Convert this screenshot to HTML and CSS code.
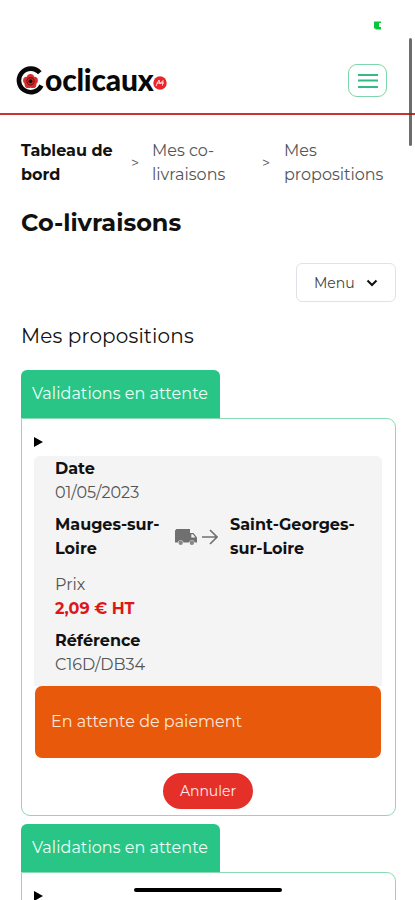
FILE: index.html
```
<!DOCTYPE html>
<html lang="fr">
<head>
    <meta charset="utf-8">
    <title>Coclicaux - Mes propositions</title>
    <meta name="viewport" content="width=device-width, initial-scale=1.0">
    <link rel="stylesheet" href="styles.css">
</head>
<body>
    <div class="status-bar">
        <svg class="status-icon" viewBox="0 0 7 9"><path d="M0.5 0.5H7V2H5V6H7V8.5H1.5V7.5H0V1Z"/></svg>
    </div>

    <header class="header">
        <div class="logo">
            <svg class="logo-mark" viewBox="0 0 28 30">
                <path d="M23.8 6.8A11.8 11.8 0 1 0 25.4 19.5" fill="none" stroke="#080808" stroke-width="4.6"/>
                <g fill="#d92d2c">
                    <circle cx="14.5" cy="11.6" r="3.6"/>
                    <circle cx="18.3" cy="14.4" r="3.6"/>
                    <circle cx="16.8" cy="18.4" r="3.6"/>
                    <circle cx="12.2" cy="18.4" r="3.6"/>
                    <circle cx="10.7" cy="14.4" r="3.6"/>
                </g>
                <circle cx="14.5" cy="15.3" r="3.6" fill="none" stroke="#7d1316" stroke-width="1.2"/>
                <circle cx="14.5" cy="15.3" r="2" fill="#180a0a"/>
            </svg>
            <span class="logo-text">oclicaux</span>
            <svg class="logo-badge" viewBox="0 0 14 14">
                <circle cx="7" cy="7" r="6.7" fill="#e9252b"/>
                <path d="M3 10L6 4L7 8L10 4.5L9.5 9.5M3.5 7H11" fill="none" stroke="#fff" stroke-width=".8"/>
            </svg>
        </div>
        <button class="burger" aria-label="Navigation">
            <svg viewBox="0 0 20 16"><path d="M0 2H20M0 7.5H20M0 14H20"/></svg>
        </button>
    </header>

    <main class="content">
        <nav class="breadcrumb">
            <b>Tableau de bord</b>
            <i>&gt;</i>
            <span>Mes co-<br>livraisons</span>
            <i>&gt;</i>
            <span>Mes propositions</span>
        </nav>

        <h1>Co-livraisons</h1>

        <div class="actions">
            <button class="menu-btn">
                Menu
                <svg viewBox="0 0 12 8"><path d="M1.5 1.5L6 6L10.5 1.5"/></svg>
            </button>
        </div>

        <h2>Mes propositions</h2>

        <section class="proposal">
            <div class="tab">Validations en attente</div>
            <div class="panel">
                <div class="summary"><svg viewBox="0 0 9 10"><path d="M0 0L9 5L0 10Z"/></svg></div>
                <div class="details">
                    <div class="field">
                        <div class="label">Date</div>
                        <div class="value">01/05/2023</div>
                    </div>
                    <div class="route">
                        <div class="label">Mauges-sur-<br>Loire</div>
                        <div class="route-icons">
                            <svg class="truck" viewBox="0 0 22 17">
                                <path fill="#707070" d="M1.5 0H15V4H18.5L22 8.5V13.5H19.8A3 3 0 0 0 14 13.5H8.6A3 3 0 0 0 2.8 13.5H0V1.5Z"/>
                                <path fill="#f4f4f4" d="M16.3 5.3H18L20.3 8.5H16.3Z"/>
                                <circle cx="5.7" cy="13.7" r="2.2"/>
                                <circle cx="16.9" cy="13.7" r="2.2"/>
                            </svg>
                            <svg class="arrow" viewBox="0 0 16 16"><path d="M0 8H15M8 1L15 8L8 15"/></svg>
                        </div>
                        <div class="label">Saint-Georges-<br>sur-Loire</div>
                    </div>
                    <div class="field">
                        <div class="value">Prix</div>
                        <div class="label price">2,09 € HT</div>
                    </div>
                    <div class="field">
                        <div class="label">Référence</div>
                        <div class="value">C16D/DB34</div>
                    </div>
                </div>
                <div class="alert">En attente de paiement</div>
                <button class="cancel-btn">Annuler</button>
            </div>
        </section>

        <section class="proposal">
            <div class="tab">Validations en attente</div>
            <div class="panel">
                <div class="summary"><svg viewBox="0 0 9 10"><path d="M0 0L9 5L0 10Z"/></svg></div>
            </div>
        </section>
    </main>

    <div class="scrollbar"></div>
    <div class="home-bar"></div>
</body>
</html>
```
FILE: styles.css
```
* {
    box-sizing: border-box;
}
body {
    margin: 0;
    height: 900px;
    overflow: hidden;
    position: relative;
    background: #fff;
    color: #111;
    font-family: Montserrat, Inter, sans-serif;
    font-size: 16px;
    line-height: 24px;
}
button {
    font-family: inherit;
    cursor: pointer;
}
svg {
    display: block;
}
.status-bar {
    height: 48px;
    padding: 21px 34px 0 0;
    display: flex;
    justify-content: flex-end;
}
.status-icon {
    width: 7px;
    height: 9px;
    fill: #08c63a;
}
.header {
    height: 67px;
    padding: 0 28px 0 16px;
    display: flex;
    justify-content: space-between;
    align-items: center;
    border-bottom: 2px solid #cf3030;
}
.logo {
    display: flex;
    align-items: center;
}
.logo-mark {
    width: 28px;
    height: 30px;
}
.logo-text {
    margin: -3px 0 0 1px;
    color: #080808;
    font-family: Lato, sans-serif;
    font-size: 30px;
    font-weight: 900;
    letter-spacing: -0.2px;
    line-height: 30px;
}
.logo-badge {
    width: 14px;
    height: 14px;
    margin: 4px 0 0 -1px;
}
.burger {
    width: 39px;
    height: 33px;
    padding: 0;
    display: flex;
    align-items: center;
    justify-content: center;
    background: #fff;
    border: 1px solid #7dd4ad;
    border-radius: 9px;
}
.burger svg {
    width: 20px;
    height: 16px;
    fill: none;
    stroke: #35b985;
    stroke-width: 2;
}
.content {
    height: 785px;
    padding: 24px 19px 0 21px;
    overflow: hidden;
}
.breadcrumb {
    display: grid;
    grid-template-columns: 110px 21px 110px 22px 112px;
    align-items: center;
    color: #555;
}
.breadcrumb b {
    width: 98px;
    color: #111;
    font-weight: 700;
}
.breadcrumb i {
    font-style: normal;
    font-size: 14px;
}
h1 {
    margin: 20px 0 0;
    font-size: 24px;
    font-weight: 700;
    line-height: 32px;
}
.actions {
    margin-top: 24px;
    display: flex;
    justify-content: flex-end;
}
.menu-btn {
    width: 100px;
    height: 39px;
    padding: 0 17px;
    display: flex;
    align-items: center;
    justify-content: space-between;
    background: #fff;
    border: 1px solid #dfe2e6;
    border-radius: 6px;
    color: #444;
    font-size: 14px;
}
.menu-btn svg {
    width: 12px;
    height: 8px;
    fill: none;
    stroke: #111;
    stroke-width: 2;
}
h2 {
    margin: 20px 0;
    font-size: 20px;
    font-weight: 400;
    letter-spacing: 0.15px;
    line-height: 28px;
}
.proposal {
    margin-bottom: 8px;
}
.tab {
    width: 199px;
    height: 48px;
    padding: 12px 0 0 11px;
    background: #28c587;
    border-radius: 6px 6px 0 0;
    color: #e9fff5;
    letter-spacing: 0.04px;
    white-space: nowrap;
}
.panel {
    height: 398px;
    padding: 0 13px 0 12px;
    border: 1px solid #8bdab6;
    border-radius: 0 9px 9px 9px;
}
.summary {
    height: 37px;
    padding: 18px 0 0;
}
.summary svg {
    width: 9px;
    height: 10px;
}
.details {
    height: 230px;
    padding: 1px 0 0 21px;
    background: #f4f4f4;
    border-radius: 6px 6px 0 0;
}
.field {
    margin-bottom: 8px;
}
.label {
    font-weight: 700;
}
.value {
    color: #555;
}
.route {
    margin-bottom: 12px;
    display: grid;
    grid-template-columns: 120px 55px 1fr;
    align-items: center;
}
.route-icons {
    display: flex;
    align-items: center;
    gap: 5px;
}
.truck {
    width: 22px;
    height: 17px;
    fill: #888;
}
.arrow {
    width: 16px;
    height: 16px;
    fill: none;
    stroke: #707070;
    stroke-width: 1.6;
}
.price {
    color: #dc1717;
}
.alert {
    height: 72px;
    margin: 0 1px;
    padding-left: 16px;
    background: #e9590c;
    border-radius: 7px;
    color: #ffe6d6;
    line-height: 71px;
}
.cancel-btn {
    display: block;
    width: 90px;
    height: 36px;
    margin: 15px auto 0;
    padding: 0;
    background: #e5302a;
    border: 0;
    border-radius: 18px;
    color: #ffe9e8;
    font-size: 14px;
}
.scrollbar {
    position: absolute;
    top: 38px;
    right: 3px;
    width: 3px;
    height: 108px;
    background: rgba(60, 60, 60, 0.75);
    border-radius: 2px;
}
.home-bar {
    position: absolute;
    top: 888px;
    left: 134px;
    width: 148px;
    height: 4px;
    background: #000;
    border-radius: 2px;
}
```
